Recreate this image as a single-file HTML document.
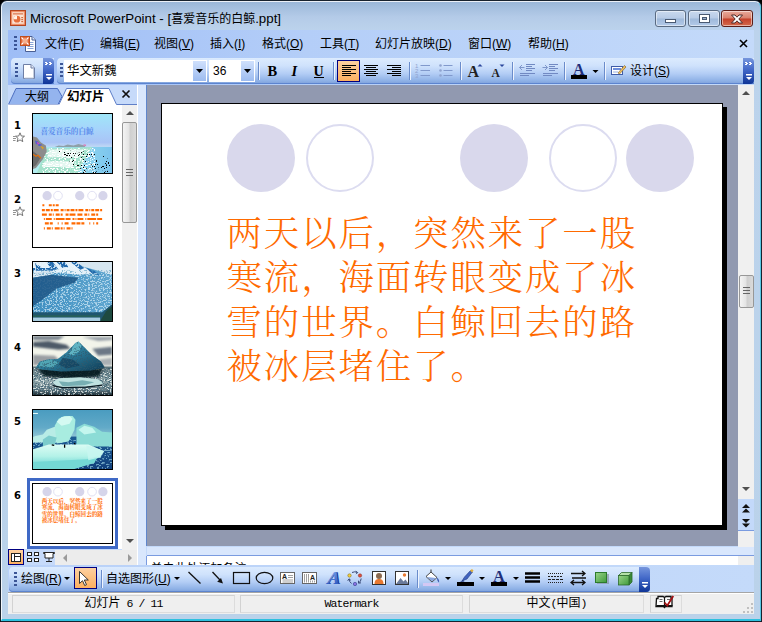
<!DOCTYPE html>
<html lang="zh-CN">
<head>
<meta charset="utf-8">
<title>Microsoft PowerPoint - [喜爱音乐的白鲸.ppt]</title>
<style>
*{box-sizing:border-box;margin:0;padding:0}
html,body{width:762px;height:622px;overflow:hidden;background:#000}
body{position:relative;font-family:"Liberation Sans","Noto Sans CJK SC",sans-serif;font-size:12px;color:#000}
.abs{position:absolute}
svg{position:absolute;overflow:visible}
#win{position:absolute;left:0;top:0;width:762px;height:622px;border-radius:7px 7px 0 0;background:linear-gradient(#99b5d7 0,#a3bede 6px,#b4cbe8 16px,#bcd3ec 30px,#bad2ea 100%);border:1px solid #18222e;overflow:hidden}
#win:before{content:"";position:absolute;left:0;top:0;right:0;bottom:0;border:1px solid rgba(255,255,255,.8);border-right:1px solid #58c8e4;border-bottom:2px solid #2ec0de;border-radius:6px 6px 0 0}
#title{position:absolute;left:29px;top:9px;font-size:12px;line-height:18px;white-space:nowrap;color:#000}
.wb{position:absolute;top:9px;height:17px;border:1px solid #5a6b82;border-radius:3px;background:linear-gradient(#c9d9ee 0,#b7cbe6 48%,#9fb9da 52%,#b3cae8 100%);box-shadow:inset 0 0 0 1px rgba(255,255,255,.5)}
.wb.x{background:linear-gradient(#e9aa9c 0,#d9806c 48%,#c4402a 52%,#d46a4c 100%);border-color:#5b1d17}
#client{position:absolute;left:7px;top:29px;width:746px;height:584px;background:#c3d9fa;overflow:hidden}
/* menu */
#menubar{position:absolute;left:0;top:0;width:746px;height:28px;background:linear-gradient(90deg,#9ebdf6 0,#b4cef8 40%,#c4dafa 100%)}
.mi{position:absolute;top:6px;font-size:12px;line-height:16px;white-space:nowrap}
/* toolbar */
#tbrow{position:absolute;left:0;top:28px;width:746px;height:27px;background:linear-gradient(90deg,#9ebdf6 0,#b4cef8 40%,#c4dafa 100%)}
.tb{position:absolute;top:0;height:26px;background:linear-gradient(#dcebfe 0,#cfe2fc 30%,#b3cdf5 60%,#8eb1e6 88%,#7d9fd9 100%);border-radius:4px 0 0 4px;box-shadow:inset 0 -1px 0 #5c84cf}
.ovf{position:absolute;top:0;width:11px;height:26px;background:linear-gradient(#7696dd 0,#4268c8 45%,#0f3597 100%);border-radius:0 4px 4px 0}
.grip{position:absolute;width:3px;background:repeating-linear-gradient(#3b5596 0,#3b5596 2px,rgba(255,255,255,.0) 2px,rgba(255,255,255,0) 4px)}
.sep{position:absolute;top:4px;width:2px;height:18px;border-left:1px solid #6a8ccb;border-right:1px solid #eef4fe}
.combo{position:absolute;top:2px;height:22px;background:#fff;border:0}
.cbtn{position:absolute;top:3px;width:13px;height:20px;background:linear-gradient(#cfe0fc,#9dbcf0);}
.sel{position:absolute;background:linear-gradient(#fdd0a0,#fdb060);border:1px solid #000080}
/* left pane */
#lpane{position:absolute;left:0;top:55px;width:131px;height:482px;background:#c6dafa}
#thumbs{position:absolute;left:0;top:20px;width:114px;height:444px;background:#fff}
.th{position:absolute;left:24px;width:81px;height:61px;border:1px solid #000;background:#fff;overflow:hidden}
.num{position:absolute;left:6px;width:12px;font-weight:bold;font-family:"DejaVu Sans",sans-serif;font-size:10px;line-height:12px}
.vsb{position:absolute;width:16px;background:#f0f0f0}
.thumbbtn{position:absolute;left:1px;width:14px;border:1px solid #979797;border-radius:2px;background:linear-gradient(90deg,#f4f4f4 0,#e4e4e4 45%,#cfcfcf 55%,#dadada 100%)}
/* editing */
#edit{position:absolute;left:138px;top:55px;width:592px;height:461px;background:#9199b0;border-left:1px solid #5f86cc}
#slide{position:absolute;left:14px;top:18px;width:562px;height:423px;background:#fff;border:1px solid #000;box-shadow:4px 4px 0 #000}
.c{position:absolute;width:68px;height:68px;border-radius:50%;top:19.500px}
.cf{background:#d9d8ec}
.co{border:2px solid #dcdcf0;background:#fff}
#stext{position:absolute;left:64.500px;top:108.800px;letter-spacing:2.020px;font-family:"Liberation Serif","Noto Serif CJK SC",serif;font-weight:300;font-size:35.300px;line-height:44.450px;color:#ff6a00;white-space:nowrap}
/* status */
#status{position:absolute;left:0;top:562px;width:746px;height:22px;background:#efefef;border-top:1px solid #a5a5a5;box-shadow:inset 0 1px 0 #fff}
.sp{position:absolute;top:2px;height:18px;border:1px solid;border-color:#d2d2d2 #dcdcdc #dcdcdc #d2d2d2;text-align:center;font-size:12px;line-height:15px;white-space:nowrap}
</style>
</head>
<body>
<div id="win">
<!-- app icon -->
<svg style="left:9px;top:9px" width="16" height="16" viewBox="0 0 16 16"><rect x=".5" y=".5" width="15" height="15" fill="#e9764a" stroke="#b4451f"/><rect x="2" y="2" width="12" height="12" fill="#fbe3d4" stroke="#f5b595" stroke-width=".8"/><rect x="3" y="3.4" width="10" height="1" fill="#d65a2c"/><circle cx="7" cy="9.2" r="3.4" fill="#e66f3c"/><path d="M7 9.2V5.8A3.4 3.4 0 0 0 3.6 9.2z" fill="#fff3ea"/><rect x="11.4" y="7" width="1.4" height="1.2" fill="#c9501f"/><rect x="11.4" y="9" width="1.4" height="1.2" fill="#c9501f"/><rect x="11.4" y="11" width="1.4" height="1.2" fill="#c9501f"/></svg>
<div id="title"><span style="font-size:13.300px">Microsoft PowerPoint - [</span>喜爱音乐的白鲸<span style="font-size:13.300px">.ppt]</span></div>
<div class="wb" style="left:654px;width:31px"><svg style="left:9px;top:8px" width="12" height="4"><rect x=".5" y=".5" width="10" height="3" fill="#fff" stroke="#4a5a72"/></svg></div>
<div class="wb" style="left:687px;width:32px"><svg style="left:10px;top:3px" width="11" height="9"><rect x=".5" y=".5" width="10" height="8" fill="#fff" stroke="#4a5a72"/><rect x="3.5" y="3.5" width="4" height="2" fill="#9ab0cc" stroke="#4a5a72"/></svg></div>
<div class="wb x" style="left:720px;width:32px"><svg style="left:9px;top:3px" width="12" height="10" viewBox="0 0 12 10"><path d="M.5 1h3.500l2 2.200L8 1h3.500L7.800 5l3.700 4H8L6 6.800 4 9H.5l3.700-4z" fill="#fff" stroke="#4c2a28" stroke-width="1"/></svg></div>
<div id="client">
  <div id="menubar">
    <div class="grip" style="left:6px;top:6px;height:15px"></div>
    <svg style="left:11px;top:5px" width="18" height="18" viewBox="0 0 18 18"><path d="M6.500 1.500h6.500l3.500 3.500v11.500h-10z" fill="#fff" stroke="#4a5f94"/><path d="M13 1.500v3.500h3.500" fill="#dfe8f6" stroke="#4a5f94"/><path d="M8.500 11.500h6M8.500 13.500h6M11 9.500h3.500M11 7.500h3.500" stroke="#8aa4d6"/><rect x="1.500" y="1.500" width="9" height="9" fill="#e2693a" stroke="#c0501f"/><circle cx="6" cy="6" r="2.700" fill="#f4b090"/><path d="M2.500 2.500l1.800 1.800M9.500 2.500L7.700 4.300M2.500 9.500l1.800-1.800M9.500 9.500L7.700 7.700" stroke="#fff" stroke-width="1.100"/></svg>
    <span class="mi" style="left:37px">文件(<u>F</u>)</span>
    <span class="mi" style="left:92px">编辑(<u>E</u>)</span>
    <span class="mi" style="left:146px">视图(<u>V</u>)</span>
    <span class="mi" style="left:202px">插入(<u>I</u>)</span>
    <span class="mi" style="left:254px">格式(<u>O</u>)</span>
    <span class="mi" style="left:312px">工具(<u>T</u>)</span>
    <span class="mi" style="left:367px">幻灯片放映(<u>D</u>)</span>
    <span class="mi" style="left:460px">窗口(<u>W</u>)</span>
    <span class="mi" style="left:520px">帮助(<u>H</u>)</span>
    <svg style="left:731px;top:9px" width="9" height="9" viewBox="0 0 9 9"><path d="M1 1l7 7M8 1L1 8" stroke="#000" stroke-width="1.600"/></svg>
  </div>
  <div id="tbrow"><div class="tb" style="left:3px;width:43px">
  <div class="grip" style="left:4px;top:5px;height:15px"></div>
  <svg style="left:11px;top:6px" width="14" height="15" viewBox="0 0 14 15"><path d="M1.500 .5h7.500l3.500 3.500v10.500h-11z" fill="#fff" stroke="#6e7fa6"/><path d="M9 .5v3.500h3.500" fill="#e4ebf7" stroke="#6e7fa6"/><path d="M11.500 5v9h-9" stroke="#c4cede" fill="none"/></svg>
  <div class="ovf" style="left:32px"><svg style="left:2px;top:4px" width="8" height="20" viewBox="0 0 8 20"><path d="M0 0h2v1h1v1h-1v1h-2v-1h1v-1h-1zM4 0h2v1h1v1h-1v1h-2v-1h1v-1h-1z" fill="#fff"/><path d="M1 12h6v1.500h-6zM1 15h6l-3 3z" fill="#fff"/></svg></div>
</div>
<div class="tb" style="left:49px;width:697px">
  <div class="grip" style="left:3px;top:5px;height:15px"></div>
  <div class="combo" style="left:7px;width:143px"><span style="position:absolute;left:3px;top:3px;font-size:12.400px;line-height:16px">华文新魏</span></div>
  <div class="cbtn" style="left:136px"><svg style="left:3px;top:8px" width="7" height="4"><path d="M0 0h7l-3.500 4z" fill="#000"/></svg></div>
  <div class="combo" style="left:152px;width:46px"><span style="position:absolute;left:4px;top:3px;font-size:12px;line-height:16px">36</span></div>
  <div class="cbtn" style="left:184px"><svg style="left:3px;top:8px" width="7" height="4"><path d="M0 0h7l-3.500 4z" fill="#000"/></svg></div>
  <div class="sep" style="left:201px"></div>
  <div class="sep" style="left:276px"></div>
  <div class="sel" style="left:280px;top:2px;width:23px;height:22px"></div>
  <div class="sep" style="left:352px"></div>
  <div class="sep" style="left:403px"></div>
  <div class="sep" style="left:455px"></div>
  <div class="sep" style="left:507px"></div>
  <div class="sep" style="left:547px"></div>
  <svg style="left:0;top:0" width="697" height="26" viewBox="57 58 697 26" font-family="'Liberation Serif',serif" font-weight="bold">
    <text x="267.500" y="76" font-size="14.500" fill="#000">B</text>
    <text x="291.500" y="76" font-size="14.500" font-style="italic" fill="#000">I</text>
    <text x="313.500" y="76" font-size="14" fill="#000">U</text><rect x="314" y="77" width="10" height="1" fill="#000"/>
    <g stroke="#000" stroke-width="1" shape-rendering="crispEdges">
      <path d="M342 65.500h14M342 67.500h9M342 69.500h14M342 71.500h9M342 73.500h14M342 75.500h9"/>
      <path d="M364 65.500h14M366 67.500h10M364 69.500h14M366 71.500h10M364 73.500h14M366 75.500h10"/>
      <path d="M387 65.500h14M392 67.500h9M387 69.500h14M392 71.500h9M387 73.500h14M392 75.500h9"/>
    </g>
    <g stroke="#8199cc" stroke-width="1.200" fill="none">
      <path d="M420.500 65.500h9.500M420.500 70.500h9.500M420.500 75.500h9.500"/>
      <path d="M443.500 65.500h9M443.500 70.500h9M443.500 75.500h9"/>
    </g>
    <g fill="#90a4cf"><text x="415" y="68" font-size="6" font-family="'Liberation Sans',sans-serif" font-weight="normal">1</text><text x="415" y="73" font-size="6" font-family="'Liberation Sans',sans-serif" font-weight="normal">2</text><text x="415" y="78" font-size="6" font-family="'Liberation Sans',sans-serif" font-weight="normal">3</text>
      <circle cx="440.500" cy="65.500" r="1.300"/><circle cx="440.500" cy="70.500" r="1.300"/><circle cx="440.500" cy="75.500" r="1.300"/></g>
    <text x="467.500" y="77" font-size="16" fill="#222">A</text><path d="M477.500 66.500h5l-2.500-2.500z" fill="#2a469c"/>
    <text x="491.500" y="77" font-size="11.500" fill="#222">A</text><path d="M499.500 64.500h5l-2.500 2.500z" fill="#2a469c"/>
    <g stroke="#7189c2" stroke-width="1" fill="none" shape-rendering="crispEdges">
      <path d="M526 64.500h9M526 66.500h6M526 68.500h9M526 70.500h6M520 73.500h15M520 75.500h9"/>
      <path d="M549 64.500h9M549 66.500h6M549 68.500h9M549 70.500h6M543 73.500h15M543 75.500h9"/>
    </g>
    <path d="M524.500 67.500h-5m2.500-2.500l-2.500 2.500 2.500 2.500" stroke="#7f97ca" fill="none"/>
    <path d="M542.500 67.500h5m-2.500-2.500l2.500 2.500-2.500 2.500" stroke="#7f97ca" fill="none"/>
    <text x="573" y="74.500" font-size="16" fill="#1f2f7a">A</text><rect x="571" y="75" width="16" height="4" fill="#000"/>
    <path d="M592.500 70h6l-3 3z" fill="#000"/>
    <g><rect x="611.500" y="66.500" width="11" height="8" fill="#fff" stroke="#3f5ca8"/><rect x="613" y="68" width="8" height="2" fill="#6f8fdc"/><path d="M613 72h5" stroke="#9ab0e0"/><path d="M618 73l6.500-7.500 1.500 1.500-6.500 7z" fill="#f0c060" stroke="#7a5a20" stroke-width=".6"/></g>
  </svg>
  <span style="position:absolute;left:573px;top:5px;font-size:12px;line-height:16px;white-space:nowrap">设计(<u>S</u>)</span>
  <div class="ovf" style="left:686px"><svg style="left:2px;top:4px" width="8" height="20" viewBox="0 0 8 20"><path d="M0 0h2v1h1v1h-1v1h-2v-1h1v-1h-1zM4 0h2v1h1v1h-1v1h-2v-1h1v-1h-1z" fill="#fff"/><path d="M1 12h6v1.500h-6zM1 15h6l-3 3z" fill="#fff"/></svg></div>
</div>
</div>
  <div id="lpane"><!-- tabs: lpane origin = screen (8,85) -->
<svg style="left:0;top:0" width="131" height="21" viewBox="8 85 131 21">
  <rect x="8" y="85" width="131" height="21" fill="#c6dafa"/>
  <path d="M8.500 104.500L16 88.500H57.500L62 96.500 58 104.500z" fill="#94b4ee" stroke="#4d6fc0"/>
  <path d="M8 104.500H59L66.500 88.500H109L116.500 104.500H139V106H8z" fill="#fff"/>
  <path d="M59 104.500L66.500 88.500H109L116.500 104.500H139" fill="none" stroke="#5f7fc8"/>
  <path d="M122.500 90.500l7 7M129.500 90.500l-7 7" stroke="#111" stroke-width="1.700"/>
</svg>
<span style="position:absolute;left:17px;top:4px;font-size:12px;line-height:16px;white-space:nowrap">大纲</span>
<span style="position:absolute;left:59px;top:4px;font-size:12.500px;font-weight:bold;line-height:16px;white-space:nowrap">幻灯片</span>
<div id="thumbs">
  <div class="num" style="top:14.5px">1</div>
  <div class="num" style="top:88.5px">2</div>
  <div class="num" style="top:162.5px">3</div>
  <div class="num" style="top:236.5px">4</div>
  <div class="num" style="top:310.5px">5</div>
  <div class="num" style="top:384.5px">6</div>
  <!-- animation stars -->
  <svg style="left:5px;top:27px" width="12" height="11" viewBox="0 0 12 11"><path d="M7 .8l1.300 3.200 3.200.2-2.500 2.100.8 3.300L7 7.900 4.200 9.600 5 6.300 2.500 4.200l3.200-.2z" fill="#fff" stroke="#555" stroke-width=".8"/><path d="M0 4.500h2.500M0 6.500h3M0 8.500h2.500" stroke="#777" stroke-width=".8"/></svg>
  <svg style="left:5px;top:101px" width="12" height="11" viewBox="0 0 12 11"><path d="M7 .8l1.300 3.200 3.200.2-2.500 2.100.8 3.300L7 7.900 4.200 9.600 5 6.300 2.500 4.200l3.200-.2z" fill="#fff" stroke="#555" stroke-width=".8"/><path d="M0 4.500h2.500M0 6.500h3M0 8.500h2.500" stroke="#777" stroke-width=".8"/></svg>
  <div class="th" style="top:8px"><svg style="left:0;top:0" width="79" height="59" viewBox="0 0 80 60" preserveAspectRatio="none">
  <defs>
    <linearGradient id="sky1" x1="0" y1="0" x2="0" y2="1"><stop offset="0" stop-color="#9fe6f8"/><stop offset=".45" stop-color="#a6d4fb"/><stop offset=".85" stop-color="#a9c4f6"/><stop offset="1" stop-color="#c4dcf4"/></linearGradient>
    <linearGradient id="sea1" x1="0" y1="0" x2="1" y2="0"><stop offset="0" stop-color="#b4eef0"/><stop offset=".6" stop-color="#8fd8ee"/><stop offset="1" stop-color="#7cc4ee"/></linearGradient>
    <filter id="sp1" x="0" y="0" width="1" height="1"><feTurbulence type="fractalNoise" baseFrequency=".9" numOctaves="1" seed="3"/><feColorMatrix values="0 0 0 0 0  0 0 0 0 0  0 0 0 0 0  0 0 0 -30 10.500"/></filter>
    <filter id="sp1w" x="0" y="0" width="1" height="1"><feTurbulence type="fractalNoise" baseFrequency=".5 .9" numOctaves="1" seed="8"/><feColorMatrix values="0 0 0 0 1  0 0 0 0 1  0 0 0 0 1  0 0 0 -14 6.600"/></filter>
  <clipPath id="cp1"><path d="M22 36h20l36 8v16H50z"/></clipPath></defs>
  <rect width="80" height="34" fill="url(#sky1)"/>
  <rect y="33.500" width="80" height="26.500" fill="url(#sea1)"/>
  <path d="M14 35l46-1.500-7 12-8 14.500H4z" fill="#a4e2cc"/>
  <path d="M17 36h34l-4 8H14zM12 48h30l-2 6H9z" fill="#eefaf6" opacity=".85"/>
  <rect x="10" y="35" width="52" height="25" filter="url(#sp1w)"/>
  <path d="M22 33.500l4-1.500 5 .5 4-1.500 6 1 5-1.500 6 1.500 1 1.500z" fill="#8fa0a8"/>
  <path d="M50 31.500l3-.8 1 2z" fill="#e070b0"/>
  <g clip-path="url(#cp1)"><rect x="18" y="33" width="62" height="27" filter="url(#sp1)"/></g>
  <path d="M0 23l4 1 4 5 5 3 1 6-4 8-7 9-3 1z" fill="#8c8c8c"/><path d="M0 38l8 6-5 8-3 2z" fill="#6a6a6a"/>
  <path d="M2 27l3 1 1 2-3 1zM5 30l4 1-1 2-3-1z" fill="#5060d0"/><path d="M7 32l4 2-1 2z" fill="#e0a020"/><path d="M0 41l3 2 2-1 3 3" stroke="#e07010" stroke-width="1.200" fill="none"/><path d="M4 29l2 1.500" stroke="#e040c0" stroke-width="1.200"/>
  <text x="7.500" y="20.500" font-size="7.700" font-weight="bold" font-family="'Liberation Serif','Noto Serif CJK SC',serif" fill="#5c8cec">喜爱音乐的白鲸</text>
</svg>
</div>
  <div class="th" style="top:82px"><svg style="left:0;top:0" width="79" height="59" viewBox="0 0 80 60" preserveAspectRatio="none">
  <g fill="#d6d5ea"><circle cx="14.300" cy="7.800" r="4.700"/><circle cx="47.300" cy="7.800" r="4.700"/><circle cx="70.800" cy="7.800" r="4.700"/></g>
  <g fill="#fff" stroke="#dcdcf0" stroke-width=".9"><circle cx="25.300" cy="7.800" r="4.400"/><circle cx="59.800" cy="7.800" r="4.400"/></g>
  <g stroke="#ff6a00" stroke-width="2.200" fill="none">
    <path d="M9.500 17.500h2M16 17.500h11" stroke-dasharray="3 1 2 1"/>
    <path d="M9 22.500h62" stroke-dasharray="3 1 4 1 2 1 5 2 3 1 1 1"/>
    <path d="M9 27h60" stroke-dasharray="5 2 3 1 1 2 4 1 2 3 3 1 6 2"/>
    <path d="M11 31.500h60" stroke-dasharray="1 1 6 2 1 1 9 1 5 2 2 1"/>
    <path d="M12 36h54" stroke-dasharray="4 1 3 5 1 3 1 2 4 3 4 1"/>
    <path d="M11 41h30" stroke-dasharray="1 2 4 1 1 2 5 1 2 1"/>
  </g>
</svg>
</div>
  <div class="th" style="top:156px"><svg style="left:0;top:0" width="79" height="59" viewBox="0 0 80 60" preserveAspectRatio="none">
  <defs>
    <linearGradient id="g3" x1="0" y1="0" x2="1" y2="0"><stop offset="0" stop-color="#3b8cc0"/><stop offset="1" stop-color="#62a8d2"/></linearGradient>
    <filter id="n3" x="0" y="0" width="1" height="1"><feTurbulence type="fractalNoise" baseFrequency=".55 .75" numOctaves="2" seed="5"/><feColorMatrix values="0 0 0 0 .82  0 0 0 0 .94  0 0 0 0 1  0 0 0 -11 5.300"/></filter>
    <filter id="n3d" x="0" y="0" width="1" height="1"><feTurbulence type="fractalNoise" baseFrequency=".5 .7" numOctaves="2" seed="11"/><feColorMatrix values="0 0 0 0 .08  0 0 0 0 .32  0 0 0 0 .52  0 0 0 -11 5.100"/></filter>
  </defs>
  <rect width="80" height="60" fill="url(#g3)"/>
  <path d="M0 0h80v13L66 9 52 5 40 0z" fill="#d6e6f0"/>
  <path d="M0 0h40l8 3 10 6 8 3-20 1-20-2-26 2z" fill="#e4f0f8"/>
  <path d="M2 1l10 7-8 1zM14 0h6l6 8h-8zM24 0h8l4 5-6 1zM38 0h6l8 6-4 2zM54 6l8 3 6 5-8-2zM0 6h22l-2 3H0z" fill="#2269ac"/>
  <rect x="0" y="0" width="46" height="10" filter="url(#n3)" opacity=".8"/><path d="M0 11l18-2 4 2-6 3-16 2z" fill="#cfe0ec"/>
  <rect x="0" y="9" width="80" height="44" filter="url(#n3d)" opacity=".6"/>
  <rect x="0" y="12" width="80" height="41" filter="url(#n3)" opacity=".6"/>
  <path d="M0 16l18-3 28 3-4 5-18 6-14 11-10 7z" fill="#1f5888" opacity=".88"/>
  <path d="M0 51h70l10-8v17H0z" fill="#1f5670"/>
  <path d="M68 60l6-10 6-5v15z" fill="#1e4a40"/>
  <path d="M0 55h68" stroke="#2f6a48" stroke-width="1"/>
  <rect x="0" y="56.500" width="68" height="3.500" fill="#a8cde0"/>
</svg>
</div>
  <div class="th" style="top:230px"><svg style="left:0;top:0" width="79" height="59" viewBox="0 0 80 60" preserveAspectRatio="none">
  <defs>
    <linearGradient id="w4" x1="0" y1="0" x2="0" y2="1"><stop offset="0" stop-color="#5a7078"/><stop offset=".5" stop-color="#8ea4a8"/><stop offset=".8" stop-color="#6a8088"/><stop offset="1" stop-color="#1c2c34"/></linearGradient>
    <linearGradient id="i4" x1="0" y1="0" x2="1" y2="1"><stop offset="0" stop-color="#4aa0b8"/><stop offset=".5" stop-color="#2a7896"/><stop offset="1" stop-color="#0e3a54"/></linearGradient>
    <filter id="n4" x="0" y="0" width="1" height="1"><feTurbulence type="fractalNoise" baseFrequency=".5 .9" numOctaves="2" seed="2"/><feColorMatrix values="0 0 0 0 .92  0 0 0 0 .97  0 0 0 0 .95  0 0 0 -12 5.700"/></filter>
    <filter id="n4d" x="0" y="0" width="1" height="1"><feTurbulence type="fractalNoise" baseFrequency=".6 .9" numOctaves="2" seed="7"/><feColorMatrix values="0 0 0 0 .03  0 0 0 0 .1  0 0 0 0 .15  0 0 0 -12 5.500"/></filter>
    <filter id="n4i" x="0" y="0" width="1" height="1"><feTurbulence type="fractalNoise" baseFrequency=".6 .9" numOctaves="2" seed="9"/><feColorMatrix values="0 0 0 0 .03  0 0 0 0 .1  0 0 0 0 .15  0 0 0 -12 5.600"/><feComposite operator="in" in2="SourceGraphic"/></filter>
    <filter id="b4"><feGaussianBlur stdDeviation="1.200"/></filter>
  </defs>
  <rect width="80" height="34" fill="#f2f4ea"/>
  <g filter="url(#b4)">
    <path d="M0 0h32l-6 4H0z" fill="#7c8690"/>
    <path d="M0 6l16-1 18 4 4 4-12 1-26-3z" fill="#4e5a68"/>
    <path d="M50 1h30v3l-14 1z" fill="#98a0a8"/>
    <path d="M60 13l20-2v8l-14 1z" fill="#6c7886"/>
    <path d="M0 19l22 1 6 6-28 4z" fill="#9a9ea2"/>
    <path d="M66 24l14-2v8h-10z" fill="#aab0b4"/>
  </g>
  <rect y="31" width="80" height="29" fill="url(#w4)"/>
  <rect y="33" width="80" height="27" filter="url(#n4)" opacity=".75"/>
  <rect y="33" width="80" height="27" filter="url(#n4d)" opacity=".7"/>
  <path d="M5 33h66l-4 8-26 3-30-3z" fill="#06141e" opacity=".9" filter="url(#b4)"/>
  <path d="M3 32l4-6 8-2 10-.5 9-7 9-9.500 3-1.500 5 5 8.500 8.500 9.500 7 3.600 6-14 3-30 1-20-2z" fill="url(#i4)"/>
  <path d="M43 7l3-1.500 3 4-2 6-6 4-5-1z" fill="#6cc0cc" opacity=".8"/>
  <path d="M8 26l10-2 8 3-6 5-14-1z" fill="#5ab0bc" opacity=".8"/>
  <path d="M30 22l10 2 8 6-14 3-8-4z" fill="#123c58" opacity=".7"/>
  <path d="M3 32l4-6 8-2 10-.5 9-7 9-9.500 3-1.500 5 5 8.500 8.500 9.500 7 3.600 6-14 3-30 1-20-2z" filter="url(#n4i)" opacity=".6"/>
  <path d="M20 47l6-4 22-1 18 2 5 4-6 3-40 1z" fill="#bfe2e0"/>
  <path d="M26 46l10 1 14-2 12 2-10 3-22 1z" fill="#5a9aa0" opacity=".7"/>
  <path d="M20 50.500l10 2 24-.5 16-2" stroke="#0a1a22" stroke-width="1.400" fill="none"/>
</svg>
</div>
  <div class="th" style="top:304px"><svg style="left:0;top:0" width="79" height="59" viewBox="0 0 80 60" preserveAspectRatio="none">
  <defs>
    <linearGradient id="g5" x1="0" y1="0" x2="0" y2="1"><stop offset="0" stop-color="#4a9cc0"/><stop offset=".6" stop-color="#62aac8"/><stop offset="1" stop-color="#9cccd8"/></linearGradient>
    <linearGradient id="w5" x1="0" y1="0" x2="0" y2="1"><stop offset="0" stop-color="#1c5c94"/><stop offset="1" stop-color="#12407c"/></linearGradient>
    <linearGradient id="f5" x1="0" y1="0" x2="0" y2="1"><stop offset="0" stop-color="#dcfcf4"/><stop offset=".6" stop-color="#b4f2e8"/><stop offset="1" stop-color="#7cdcd8"/></linearGradient>
    <filter id="n5" x="0" y="0" width="1" height="1"><feTurbulence type="fractalNoise" baseFrequency=".4 .9" numOctaves="2" seed="4"/><feColorMatrix values="0 0 0 0 .4  0 0 0 0 .75  0 0 0 0 .85  0 0 0 -12 5.500"/></filter>
    <filter id="b5"><feGaussianBlur stdDeviation=".8"/></filter>
  </defs>
  <rect width="80" height="30" fill="url(#g5)"/>
  <rect y="27" width="80" height="33" fill="url(#w5)"/>
  <rect y="30" width="80" height="30" filter="url(#n5)" opacity=".6"/>
  <g filter="url(#b5)">
    <path d="M0 27l10-2 4-5 8-3 6 4 2 12H0z" fill="#b8ece6"/>
    <path d="M44 18l8-4 10 3 8 5 10 1v14H44z" fill="#8cdcd6"/>
    <path d="M22 16l4-7 6-3 8 0 3 4-1 10-6 12-12 2z" fill="#a8ece0"/>
    <path d="M24 12l5-5 8-1 3 3-3 5-8 2z" fill="#d4faf2"/>
    <path d="M46 20l6-4 8 2 4 5-12 2z" fill="#c4f6ee"/>
    <path d="M10 30l6-4 8 2-2 8-12 1z" fill="#7ccccc"/>
  </g>
  <path d="M0 40l16-5 40 0 16 7-4 6-14 4-54 3z" fill="url(#f5)"/>
  <path d="M0 53l54-3 12-3-4 7-20 6H0z" fill="#74d8d4"/>
  <path d="M54 36l8 2 10 4-4 6-12 3z" fill="#c8f6f0" opacity=".8"/>
  <path d="M19 35.500l2.500.5M32 35v3.500M41.500 34l1.500.5" stroke="#000" stroke-width="1.300"/>
  <rect x="0" y="3" width="5" height="1" fill="#e8ffff"/>
</svg>
</div>
  <div style="position:absolute;left:19px;top:373px;width:91px;height:71px;border:3px solid #3f69c6"></div>
  <div class="th" style="top:378px"><svg style="left:0;top:0" width="79" height="59" viewBox="0 0 80 60" preserveAspectRatio="none">
  <g fill="#d6d5ea"><circle cx="14.300" cy="7.800" r="4.700"/><circle cx="47.300" cy="7.800" r="4.700"/><circle cx="70.800" cy="7.800" r="4.700"/></g>
  <g fill="#fff" stroke="#dcdcf0" stroke-width=".9"><circle cx="25.300" cy="7.800" r="4.400"/><circle cx="59.800" cy="7.800" r="4.400"/></g>
  <text x="8.800" y="19.300" font-size="5.650" font-weight="700" font-family="'Liberation Serif','Noto Serif CJK SC',serif" fill="#ff6a00">两天以后，突然来了一股</text>
  <text x="8.800" y="25.800" font-size="5.650" font-weight="700" font-family="'Liberation Serif','Noto Serif CJK SC',serif" fill="#ff6a00">寒流，海面转眼变成了冰</text>
  <text x="8.800" y="32.200" font-size="5.650" font-weight="700" font-family="'Liberation Serif','Noto Serif CJK SC',serif" fill="#ff6a00">雪的世界。白鲸回去的路</text>
  <text x="8.800" y="38.700" font-size="5.650" font-weight="700" font-family="'Liberation Serif','Noto Serif CJK SC',serif" fill="#ff6a00">被冰层堵住了。</text>
</svg>
</div>
</div>
<div class="vsb" style="left:114px;top:20px;height:445px">
  <svg style="left:4px;top:6px" width="8" height="4"><path d="M0 4l4-4 4 4z" fill="#505050"/></svg>
  <div class="thumbbtn" style="left:0;top:17px;height:101px;width:15px"><svg style="left:3px;top:46px" width="8" height="8"><path d="M0 .5h7M0 3.500h7M0 6.500h7" stroke="#666"/></svg></div>
  <svg style="left:4px;top:434px" width="8" height="4"><path d="M0 0l4 4 4-4z" fill="#505050"/></svg>
</div>
<!-- view buttons row -->
<div style="position:absolute;left:0;top:465px;width:131px;height:17px;background:#c6dafa">
  <div class="sel" style="left:0;top:-1px;width:16px;height:16px"></div>
  <svg style="left:0;top:0" width="131" height="17" viewBox="8 550 131 17">
    <rect x="11.500" y="553.500" width="9" height="8" fill="#fff" stroke="#222"/><path d="M14.500 553.500v8M15 556.500h5" stroke="#222"/>
    <g fill="#fff" stroke="#222"><rect x="27.500" y="552.500" width="4" height="3"/><rect x="34.500" y="552.500" width="4" height="3"/><rect x="27.500" y="558.500" width="4" height="3"/><rect x="34.500" y="558.500" width="4" height="3"/></g>
    <path d="M43.500 552.500h11v1h-1.500v4.500h-8v-4.500h-1.500zM49 558v3M46 561.500h6" fill="#fff" stroke="#222"/>
    <rect x="55" y="550" width="83" height="16" fill="#ececec"/>
    <path d="M67 554l-4 4 4 4z" fill="#9a9a9a"/><path d="M128 554l4 4-4 4z" fill="#9a9a9a"/>
  </svg>
</div>
</div>
  <div id="edit">
    <div id="slide">
      <div class="c cf" style="left:65px"></div>
      <div class="c co" style="left:144px"></div>
      <div class="c cf" style="left:298px"></div>
      <div class="c co" style="left:387px"></div>
      <div class="c cf" style="left:464px"></div>
      <div id="stext">两天以后，突然来了一股<br>寒流，海面转眼变成了冰<br>雪的世界。白鲸回去的路<br>被冰层堵住了。</div>
    </div>
  </div>
  <!-- splitter between panes -->
<div style="position:absolute;left:129px;top:55px;width:9px;height:482px;background:#d9e7fd;border-left:1px solid #fff"></div>
<!-- right vertical scrollbar: screen x 738..754, y 85..546 -->
<div class="vsb" style="left:730px;top:55px;height:462px">
  <svg style="left:4px;top:6px" width="8" height="4"><path d="M0 4l4-4 4 4z" fill="#505050"/></svg>
  <div class="thumbbtn" style="top:190px;height:33px;width:15px"><svg style="left:3px;top:11px" width="8" height="8"><path d="M0 .5h7M0 3.500h7M0 6.500h7" stroke="#666"/></svg></div>
  <svg style="left:4px;top:402px" width="8" height="4"><path d="M0 0l4 4 4-4z" fill="#505050"/></svg>
  <div style="position:absolute;left:0;top:414px;width:16px;height:32px;background:#c3d9fa;border-bottom:1px solid #7a9be0"><svg style="left:4px;top:5px" width="8" height="24" viewBox="0 0 8 24"><path d="M0 4l4-4 4 4zM0 8.500l4-4 4 4zM0 15l4 4 4-4zM0 19.500l4 4 4-4z" fill="#111"/></svg></div>
</div>

  <!-- splitter above notes: screen y 546..556 -->
<div style="position:absolute;left:139px;top:517px;width:607px;height:9px;background:#d9e7fd;border-bottom:1px solid #7a9be0"></div>
<!-- notes pane: screen y 556..566 -->
<div style="position:absolute;left:138px;top:526px;width:592px;height:9px;background:#fff;overflow:hidden;border-left:1px solid #7a9be0"><span style="position:absolute;left:3.500px;top:5.500px;font-size:12px;line-height:14px;white-space:nowrap">单击此处添加备注</span></div>
<div style="position:absolute;left:730px;top:526px;width:16px;height:9px;background:#efefef"></div>
<!-- drawing toolbar row: screen y 566..592 -->
<div style="position:absolute;left:0;top:535px;width:746px;height:28px;background:linear-gradient(90deg,#b9d1f8 0,#c4dafa 100%)">
  <div class="tb" style="left:1px;top:2px;width:641px;height:25px;border-radius:4px">
    <div class="grip" style="left:5px;top:5px;height:15px"></div>
    <span style="position:absolute;left:12px;top:4px;font-size:12px;line-height:16px;white-space:nowrap">绘图(<u>R</u>)</span>
    <span style="position:absolute;left:97px;top:4px;font-size:12px;line-height:16px;white-space:nowrap">自选图形(<u>U</u>)</span>
    <div class="sel" style="left:65px;top:0;width:23px;height:22px"></div>
    <div class="sep" style="left:92px;top:3px"></div>
    <div class="sep" style="left:408px;top:3px"></div>
    <svg style="left:0;top:0" width="641" height="25" viewBox="9 567 641 25">
  <defs>
    <linearGradient id="gg" x1="0" y1="0" x2="1" y2="1"><stop offset="0" stop-color="#9ad48a"/><stop offset="1" stop-color="#3f9a3a"/></linearGradient>
    <linearGradient id="wa" x1="0" y1="0" x2="0" y2="1"><stop offset="0" stop-color="#7aa8f0"/><stop offset="1" stop-color="#1c49b8"/></linearGradient>
  </defs>
  <path d="M64 577h6l-3 3z" fill="#000"/>
  <path d="M79.500 571.500v12l3-2.800 2.200 4.800 1.800-.8-2.200-4.700h4z" fill="#fff" stroke="#222" stroke-width=".9"/>
  <path d="M174 577h6l-3 3z" fill="#000"/>
  <path d="M188.500 572l12 11.500" stroke="#111" stroke-width="1.300"/>
  <path d="M212.500 572l8 8.500" stroke="#111" stroke-width="1.300"/><path d="M223 583.500l-5.800-1.800 3.800-3.800z" fill="#111"/>
  <rect x="233.500" y="572.500" width="16" height="11" fill="none" stroke="#111" stroke-width="1.200"/>
  <ellipse cx="264.500" cy="578" rx="8.300" ry="5.700" fill="none" stroke="#111" stroke-width="1.200"/>
  <g><rect x="280.500" y="572.500" width="14" height="11" fill="#fff" stroke="#666"/><text x="282" y="579" font-size="7" font-weight="bold" font-family="'Liberation Sans',sans-serif" fill="#222">A</text><path d="M288 575.500h5M288 577.500h5M282.500 580h10.500M282.500 582h10.500" stroke="#888" stroke-width=".8"/></g>
  <g><rect x="302.500" y="572.500" width="14" height="11" fill="#fff" stroke="#666"/><text x="310" y="579.500" font-size="7" font-weight="bold" font-family="'Liberation Sans',sans-serif" fill="#222">A</text><path d="M304.500 574v8.500M306.500 574v8.500M308.500 574v8.500M310.500 580.500v2M312.500 580.500v2M314.500 580.500v2" stroke="#888" stroke-width=".8"/></g>
  <text transform="translate(327,584) skewX(-14)" font-size="18" font-weight="bold" font-family="'Liberation Serif',serif" fill="#1a3c9c">A</text><text transform="translate(325.800,584) skewX(-14)" font-size="18" font-weight="bold" font-family="'Liberation Serif',serif" fill="url(#wa)">A</text>
  <g fill="none" stroke="#3c4c78" stroke-width="1"><path d="M352 572.500a6 6 0 0 1 5.500 0m-1.800-1.300l2 1.300-1.600 1.600M361.200 578.500a6 6 0 0 1-2.500 4.500m2.300-.2l-2.500.4 0-2.500M351.500 583.500a6 6 0 0 1-2.500-4.500m-1.300 1.800l1.300-2 1.800 1.500"/></g>
  <circle cx="349.500" cy="575.500" r="1.700" fill="#f0d040" stroke="#806010" stroke-width=".5"/><circle cx="360" cy="575.500" r="1.700" fill="#e05040" stroke="#803020" stroke-width=".5"/><circle cx="355" cy="584" r="1.700" fill="#8a70e0" stroke="#203080" stroke-width=".5"/>
  <g><rect x="372.500" y="571.500" width="13" height="13" fill="#fff" stroke="#333"/><circle cx="379" cy="576" r="3" fill="#8a6a50"/><path d="M374.500 584c0-4 2-5 4.500-5s4.500 1 4.500 5z" fill="#e87830"/></g>
  <g><rect x="395.500" y="571.500" width="13" height="13" fill="#fff" stroke="#333"/><path d="M396 584l4.500-6 3 3.500 2-2 2.500 3.500v1z" fill="#6a7a9a"/><circle cx="404.500" cy="575" r="1.700" fill="#e87830"/></g>
  <!-- fill bucket -->
  <g><path d="M426 576.500l5-4.500 6 5.500-5 4.500z" fill="#fff" stroke="#333" stroke-width=".9"/><path d="M427 577l5 4.500 4-3.500z" fill="#8aa6e0"/><path d="M437 577.500c1.500 1 2.500 3 2 5-1.500-1-2-3-2-5z" fill="#3a58b0"/><path d="M431 572v-2.500" stroke="#333"/><rect x="423" y="583" width="16" height="3" fill="#d4c8f4"/></g>
  <path d="M445 577h6l-3 3z" fill="#000"/>
  <!-- line colour -->
  <g><path d="M462 581l2.500-4 6-6.500 2 1.500-5.500 7z" fill="#3f63c0" stroke="#223a80" stroke-width=".6"/><path d="M470 570.500l2-1.500 1.500 1.500-1.500 2z" fill="#e0b040"/><path d="M460 582l3-2 1.500 1.500z" fill="#223a80"/><rect x="457" y="582" width="17" height="4" fill="#000"/></g>
  <path d="M479 577h6l-3 3z" fill="#000"/>
  <text x="493" y="581.500" font-size="16.500" font-weight="bold" font-family="'Liberation Serif',serif" fill="#1f2f7a">A</text><rect x="491" y="582" width="16" height="4" fill="#000"/>
  <path d="M513 577h6l-3 3z" fill="#000"/>
  <path d="M525 573.500h15M525 577.500h15M525 581.500h15" stroke="#000" stroke-width="2.400"/>
  <g stroke="#222"><path d="M548 573.500h15" stroke-dasharray="1 1"/><path d="M548 576.500h15" stroke-dasharray="2 1"/><path d="M548 579.500h15" stroke-dasharray="3 1"/><path d="M548 582.500h15" stroke-dasharray="1 1"/></g>
  <g stroke="#111" stroke-width="1.300" fill="none"><path d="M571 573.500h14m-3-2.500l3 2.500-3 2.500M586 578h-14M571 582.500h14m-3-2.500l3 2.500-3 2.500M574 580l-3 2.500 3 2.500"/></g>
  <rect x="597" y="574" width="12" height="10" fill="#7f8a9a" opacity=".6"/><rect x="595.500" y="572.500" width="11" height="10" fill="url(#gg)" stroke="#2c7a2c"/>
  <g stroke="#2c6a2c" stroke-width=".8"><path d="M618.500 575.500l3-3h10.500l-3 3z" fill="#b4e0a8"/><path d="M629 575.500l3-3v9.500l-3 3z" fill="#3a8a36"/><rect x="618.500" y="575.500" width="10.500" height="9.500" fill="url(#gg)"/></g>
</svg>

    <div class="ovf" style="left:630px;height:25px"><svg style="left:2px;top:3px" width="8" height="20" viewBox="0 0 8 20"><path d="M1 12h6v1.500h-6zM1 15h6l-3 3z" fill="#fff"/></svg></div>
  </div>
</div>
<div id="status">
  <div class="sp" style="left:4px;width:223px">幻灯片<span style="font-family:'Liberation Mono',monospace;font-size:11.500px;letter-spacing:-.9px;white-space:pre"> 6 / 11</span></div>
  <div class="sp" style="left:232px;width:223px;font-family:'Liberation Mono',monospace;font-size:11.500px;letter-spacing:-.9px">Watermark</div>
  <div class="sp" style="left:461px;width:175px">中文<span style="font-family:'Liberation Mono',monospace;font-size:11.500px;letter-spacing:-.9px">(</span>中国<span style="font-family:'Liberation Mono',monospace;font-size:11.500px;letter-spacing:-.9px">)</span></div>
  <div class="sp" style="left:642px;width:32px"><svg style="left:4px;top:-1px" width="20" height="14" viewBox="0 0 20 14"><path d="M1.500 3.500h1.500v-2h5l1.500 1 1.500-1h5v2h1v8h-6.500l-1 1-1-1h-7.500z" fill="#fff" stroke="#111" stroke-width="1.300"/><path d="M1.500 10.500h16M9.500 2.500v9" stroke="#111" stroke-width="1.200"/><path d="M4.500 4.500h3M4.500 6.500h3M12 4.500h3" stroke="#444" stroke-width=".8"/><path d="M9.500 7.500l2.800 3 6-9.500" stroke="#a30f12" stroke-width="1.700" fill="none"/></svg></div>
  <svg style="left:735px;top:10px" width="11" height="11"><g fill="#c0c0c0"><rect x="8" y="0" width="2" height="2"/><rect x="4" y="4" width="2" height="2"/><rect x="8" y="4" width="2" height="2"/><rect x="0" y="8" width="2" height="2"/><rect x="4" y="8" width="2" height="2"/><rect x="8" y="8" width="2" height="2"/></g></svg>
</div>

</div>
</div>
</body>
</html>
